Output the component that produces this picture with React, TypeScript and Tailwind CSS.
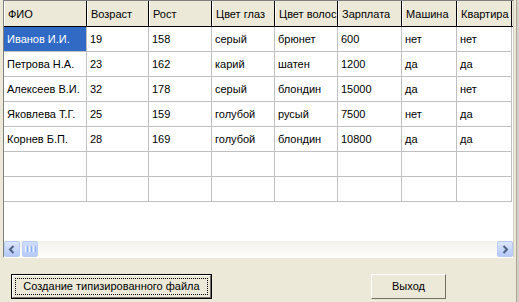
import React from 'react';

const cols = [
  { title: 'ФИО', w: 'w-[83px]' },
  { title: 'Возраст', w: 'w-[62px]' },
  { title: 'Рост', w: 'w-[63px]' },
  { title: 'Цвет глаз', w: 'w-[63px]' },
  { title: 'Цвет волос', w: 'w-[63px]' },
  { title: 'Зарплата', w: 'w-[64px]' },
  { title: 'Машина', w: 'w-[55px]' },
  { title: 'Квартира', w: 'w-[55px]' },
];

const rows = [
  ['Иванов И.И.', '19', '158', 'серый', 'брюнет', '600', 'нет', 'нет'],
  ['Петрова Н.А.', '23', '162', 'карий', 'шатен', '1200', 'да', 'да'],
  ['Алексеев В.И.', '32', '178', 'серый', 'блондин', '15000', 'да', 'нет'],
  ['Яковлева Т.Г.', '25', '159', 'голубой', 'русый', '7500', 'нет', 'да'],
  ['Корнев Б.П.', '28', '169', 'голубой', 'блондин', '10800', 'да', 'да'],
  ['', '', '', '', '', '', '', ''],
  ['', '', '', '', '', '', '', ''],
];

function ScrollButton({ dir }: { dir: 'left' | 'right' }) {
  return (
    <div className="w-[16px] h-[16px] rounded-[2px] border border-[#B8CBF3] bg-gradient-to-b from-[#DCE6FD] to-[#B4C9F8] flex items-center justify-center">
      <svg width="8" height="9" viewBox="0 0 8 9">
        {dir === 'left' ? (
          <path d="M5.5 1 L2 4.5 L5.5 8" fill="none" stroke="#4D6185" strokeWidth="2" />
        ) : (
          <path d="M2.5 1 L6 4.5 L2.5 8" fill="none" stroke="#4D6185" strokeWidth="2" />
        )}
      </svg>
    </div>
  );
}

export default function App() {
  return (
    <div
      className="w-[519px] h-[302px] bg-[#ECE9D8] flex text-[11px] text-black overflow-hidden"
      style={{ fontFamily: '"Liberation Sans", Arial, sans-serif' }}
    >
      <div className="flex-1 flex flex-col">
        {/* grid */}
        <div className="ml-[3px] w-[511px] h-[258px] border-l border-t border-[#808080] border-r border-r-[#D4D0C8] border-b border-b-[#FFFFFF] bg-white flex flex-col">
          <div className="flex h-[26px] bg-[#ECE9D8] border-b border-black shrink-0">
            {cols.map((c) => (
              <div
                key={c.title}
                className={`${c.w} shrink-0 h-full border-r border-black border-l border-l-white pl-[3px] pt-[5px] whitespace-nowrap overflow-hidden`}
              >
                {c.title}
              </div>
            ))}
          </div>
          {rows.map((r, i) => (
            <div key={i} className="flex h-[25px] shrink-0">
              {r.map((v, j) => (
                <div
                  key={j}
                  className={`${cols[j].w} shrink-0 h-full border-r border-b border-[#C0C0C0] pl-[3px] pt-[4px] whitespace-nowrap overflow-hidden ${
                    i === 0 && j === 0 ? 'bg-[#316AC5] text-white' : ''
                  }`}
                >
                  {v}
                </div>
              ))}
            </div>
          ))}
          <div className="flex-1" />
          {/* horizontal scrollbar */}
          <div className="h-[16px] shrink-0 flex items-center bg-gradient-to-b from-[#F3F1EC] to-[#FEFEFB]">
            <ScrollButton dir="left" />
            <div className="ml-[2px] w-[16px] h-[16px] rounded-[2px] border border-[#B8CBF3] bg-gradient-to-b from-[#CFDCFD] to-[#B7CBF9] flex items-center justify-center gap-[1px]">
              <div className="w-[1px] h-[6px] bg-[#EEF4FE]" />
              <div className="w-[1px] h-[6px] bg-[#8CB0F8]" />
              <div className="w-[1px] h-[6px] bg-[#EEF4FE]" />
              <div className="w-[1px] h-[6px] bg-[#8CB0F8]" />
              <div className="w-[1px] h-[6px] bg-[#EEF4FE]" />
              <div className="w-[1px] h-[6px] bg-[#8CB0F8]" />
            </div>
            <div className="flex-1" />
            <ScrollButton dir="right" />
          </div>
        </div>

        {/* buttons */}
        <div className="flex mt-[16px] pl-[11px]">
          <div className="w-[201px] h-[25px] border border-black">
            <div className="w-full h-full border border-t-white border-l-white border-r-[#716F64] border-b-[#716F64] bg-[#ECE9D8] p-[2px]">
              <div className="w-full h-full border border-dotted border-black flex items-center justify-center">
                Создание типизированного файла
              </div>
            </div>
          </div>
          <div className="ml-[159px] w-[75px] h-[25px] border border-t-white border-l-white border-r-[#716F64] border-b-[#716F64] bg-[#ECE9D8] flex items-center justify-center">
            Выход
          </div>
        </div>
      </div>
      <div className="w-[3px] h-full border-l border-[#ACA899] bg-[#D4D0C8]" />
    </div>
  );
}
